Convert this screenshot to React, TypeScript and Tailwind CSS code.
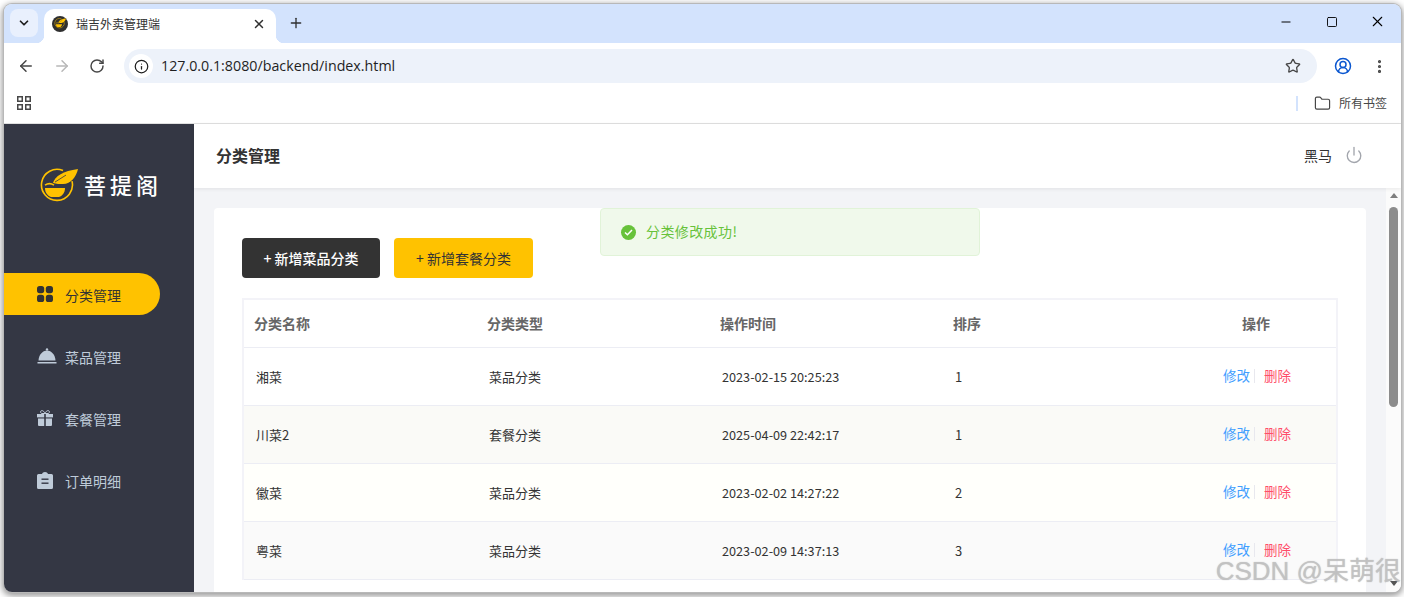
import { ChevronDown, X, Plus, ArrowLeft, ArrowRight, RotateCw, Info, Star, EllipsisVertical, Folder, Minus, Square, Power, CircleUserRound } from "lucide-react";

const rows = [
  { name: "湘菜", type: "菜品分类", time: "2023-02-15 20:25:23", sort: "1", bg: "bg-white" },
  { name: "川菜2", type: "套餐分类", time: "2025-04-09 22:42:17", sort: "1", bg: "bg-[#fafaf7]" },
  { name: "徽菜", type: "菜品分类", time: "2023-02-02 14:27:22", sort: "2", bg: "bg-[#fffffb]" },
  { name: "粤菜", type: "菜品分类", time: "2023-02-09 14:37:13", sort: "3", bg: "bg-[#fafafa]" },
];

function Logo({ size = 39 }: { size?: number }) {
  return (
    <svg width={size} height={size * 0.85} viewBox="0 0 39 33" fill="none">
      <path d="M24 2.500A15.500 15.500 0 1 0 33 13" stroke="#ffc200" strokeWidth="1.600" />
      <path d="M14 15c2-7 10-12 25-14-2 8-7 15-15 15-3 0-7 0-10-1z" fill="#ffc200" />
      <path d="M16 14l11-7" stroke="#343744" strokeWidth="0.800" />
      <path d="M6 20h20c0 5-3 8-6 9h-8c-3-1-6-4-6-9z" fill="#ffc200" />
      <path d="M6 17c3-2 6-2 9 0" stroke="#ffc200" strokeWidth="1.600" />
    </svg>
  );
}

function AppsIcon() {
  return (
    <svg width="14" height="14" viewBox="0 0 14 14" fill="none" stroke="#474747" strokeWidth="1.500">
      <rect x="0.750" y="0.750" width="4.500" height="4.500" />
      <rect x="8.750" y="0.750" width="4.500" height="4.500" />
      <rect x="0.750" y="8.750" width="4.500" height="4.500" />
      <rect x="8.750" y="8.750" width="4.500" height="4.500" />
    </svg>
  );
}

function GridIcon() {
  return (
    <svg width="16" height="16" viewBox="0 0 16 16" fill="#333">
      <rect x="0" y="0" width="7.200" height="7.200" rx="2.600" />
      <rect x="8.800" y="0" width="7.200" height="7.200" rx="2.600" />
      <rect x="0" y="8.800" width="7.200" height="7.200" rx="2.600" />
      <rect x="8.800" y="8.800" width="7.200" height="7.200" rx="2.600" />
    </svg>
  );
}

function BellIcon() {
  return (
    <svg width="20" height="16" viewBox="0 0 20 16" fill="#bfcbd9">
      <circle cx="10" cy="1.400" r="1.200" />
      <path d="M1.500 12.500C1.800 7 5.500 2.600 10 2.600s8.200 4.400 8.500 9.900z" />
      <rect x="0.500" y="14" width="19" height="1.500" />
    </svg>
  );
}

function GiftIcon() {
  return (
    <svg width="16" height="16" viewBox="0 0 16 16" fill="#bfcbd9">
      <path d="M4.500 3.500C3.200 2.600 3.300.8 4.700.6 6.100.4 7.500 2 8 3.500 8.500 2 9.900.4 11.300.6c1.400.2 1.500 2 .2 2.900z" fill="none" stroke="#bfcbd9" strokeWidth="1" />
      <rect x="0" y="4" width="7.200" height="3.400" />
      <rect x="8.800" y="4" width="7.200" height="3.400" />
      <path d="M1 8.400h6.200V16H2a1 1 0 0 1-1-1zM8.800 8.400H15V15a1 1 0 0 1-1 1H8.800z" />
    </svg>
  );
}

function ClipboardIcon() {
  return (
    <svg width="16" height="17" viewBox="0 0 16 17" fill="#bfcbd9">
      <path d="M1.500 2H5c.3-1.200 1.600-2 3-2s2.700.8 3 2h3.500A1.500 1.500 0 0 1 16 3.500V15.500A1.500 1.500 0 0 1 14.500 17h-13A1.500 1.500 0 0 1 0 15.500V3.500A1.500 1.500 0 0 1 1.500 2z" />
      <rect x="4.500" y="6.500" width="7" height="1.400" fill="#343744" />
      <rect x="4.500" y="10.500" width="7" height="1.400" fill="#343744" />
    </svg>
  );
}

function TabFlare({ side }: { side: "left" | "right" }) {
  return side === "left" ? (
    <span className="absolute bottom-0 left-[-8px] h-2 w-2 bg-[radial-gradient(circle_at_0_0,transparent_8px,white_8.5px)]" />
  ) : (
    <span className="absolute bottom-0 right-[-8px] h-2 w-2 bg-[radial-gradient(circle_at_100%_0,transparent_8px,white_8.5px)]" />
  );
}

function NavItem({ icon, label, active }: { icon: React.ReactNode; label: string; active?: boolean }) {
  return (
    <div
      className={
        active
          ? "flex h-[42px] w-[156px] items-center rounded-r-[21px] bg-[#ffc200] text-[#333]"
          : "flex h-[42px] w-[156px] items-center text-[#bfcbd9]"
      }
    >
      <span className="flex w-[61px] pl-[33px]">{icon}</span>
      <span className="pt-[2px] text-[14px]">{label}</span>
    </div>
  );
}

export default function App() {
  return (
    <div className="h-[597px] w-[1404px] overflow-hidden bg-white pl-1 pr-[3px] pt-1 font-['Noto_Sans_CJK_SC','Noto_Sans',sans-serif] text-[#333]">
      <div className="relative flex h-[588px] flex-col overflow-hidden rounded-lg shadow-[0_0_0_1px_#b8b8b8,0_2px_6px_2px_#9a9a9a]">
        {/* tab strip */}
        <div className="flex h-[39px] shrink-0 items-end bg-[#d3e3fd]">
          <button className="mb-[6px] ml-[6px] flex h-7 w-7 items-center justify-center rounded-lg bg-[#e9f0fd]">
            <ChevronDown size={14} strokeWidth={3} className="text-[#1f1f1f]" />
          </button>
          <div className="relative ml-[6px] flex h-[34px] w-[232px] items-center rounded-t-[10px] bg-white pb-[5px] pl-2 pr-[10px]">
            <TabFlare side="left" />
            <TabFlare side="right" />
            <span className="flex h-4 w-4 items-center justify-center overflow-hidden rounded-full bg-[#2f2f2f]">
              <Logo size={12} />
            </span>
            <span className="ml-2 flex-1 text-[12px] text-[#303030]">瑞吉外卖管理端</span>
            <X size={14} strokeWidth={2.500} className="text-[#303030]" />
          </div>
          <Plus size={16} strokeWidth={2} className="mb-3 ml-3 text-[#303030]" />
          <div className="flex-1" />
          <div className="mb-[13px] flex items-center gap-[31px] pr-[15px] text-black">
            <Minus size={14} strokeWidth={1.700} className="mr-[2px]" />
            <Square size={12} strokeWidth={1.800} />
            <X size={17} strokeWidth={1.500} />
          </div>
        </div>

        {/* toolbar */}
        <div className="flex h-10 shrink-0 items-center bg-white pt-[6px] text-[#474747]">
          <div className="flex w-[120px] items-center gap-[18px] pl-[13px]">
            <ArrowLeft size={18} strokeWidth={2} />
            <ArrowRight size={18} strokeWidth={2} className="text-[#b8b8b8]" />
            <RotateCw size={16} strokeWidth={2.200} />
          </div>
          <div className="flex h-[34px] w-[1193px] items-center rounded-full bg-[#edf2fa] pl-[5px] pr-4">
            <span className="flex h-6 w-6 items-center justify-center rounded-full bg-white">
              <Info size={15} strokeWidth={2} className="text-[#1f1f1f]" />
            </span>
            <span className="ml-2 flex-1 font-['Open_Sans',sans-serif] text-[14.250px] text-[#1f1f1f]">
              127.0.0.1:8080/backend/index.html
            </span>
            <Star size={16} strokeWidth={2} className="text-[#474747]" />
          </div>
          <CircleUserRound size={18} strokeWidth={2} className="ml-[17px] text-[#0b57d0]" />
          <EllipsisVertical size={17} strokeWidth={2.500} className="ml-[19px] text-[#474747]" />
        </div>

        {/* bookmarks bar */}
        <div className="flex h-[41px] shrink-0 items-center border-b border-[#e0e0e0] bg-white">
          <span className="ml-[13px]">
            <AppsIcon />
          </span>
          <div className="flex-1" />
          <span className="h-[15px] w-[2px] bg-[#d3e3fd]" />
          <Folder size={17} strokeWidth={1.700} className="ml-4 text-[#474747]" />
          <span className="ml-2 mr-[14px] text-[12px] text-[#474747]">所有书签</span>
        </div>

        {/* app */}
        <div className="flex min-h-0 flex-1">
          <aside className="flex w-[190px] shrink-0 flex-col bg-[#343744]">
            <div className="ml-[35px] mt-[44px] flex items-center gap-[6px]">
              <Logo />
              <span className="mb-[2px] text-[22px] font-medium leading-[32px] tracking-[4px] text-white">菩提阁</span>
            </div>
            <nav className="mt-[71px] flex flex-col gap-5">
              <NavItem active icon={<GridIcon />} label="分类管理" />
              <NavItem icon={<BellIcon />} label="菜品管理" />
              <NavItem icon={<GiftIcon />} label="套餐管理" />
              <NavItem icon={<ClipboardIcon />} label="订单明细" />
            </nav>
          </aside>

          <div className="flex min-w-0 flex-1 flex-col">
            <header className="z-10 flex h-16 shrink-0 items-center justify-between bg-white pb-[2px] pl-[22px] pr-[38px] shadow-[0_1px_4px_rgba(0,0,0,0.08)]">
              <h1 className="text-[16px] font-bold text-[#333]">分类管理</h1>
              <div className="flex items-center gap-[13px]">
                <span className="text-[14px] text-[#333]">黑马</span>
                <Power size={18} strokeWidth={1.800} className="text-[#a3a6ad]" />
              </div>
            </header>

            <div className="relative flex min-h-0 flex-1 overflow-hidden bg-[#f3f4f7]">
              <div className="min-w-0 flex-1 px-5 pt-5">
                <div className="h-[500px] rounded-[4px] bg-white px-7 pt-[30px]">
                  <div className="flex gap-[14px]">
                    <button className="h-10 w-[138px] rounded-[4px] bg-[#333] text-[14px] font-medium text-white">
                      + 新增菜品分类
                    </button>
                    <button className="h-10 w-[139px] rounded-[4px] bg-[#ffc200] text-[14px] text-[#333]">
                      + 新增套餐分类
                    </button>
                  </div>

                  <div className="mt-[20px] border-x-2 border-t-2 border-[#f3f3f8] text-[13px]">
                    <div className="grid h-12 grid-cols-[233px_233px_233px_233px_1fr] items-center border-b border-[#ecedf4] text-[14px] font-bold text-[#666]">
                      <div className="pl-[10px]">分类名称</div>
                      <div className="pl-[10px]">分类类型</div>
                      <div className="pl-[10px]">操作时间</div>
                      <div className="pl-[10px]">排序</div>
                      <div className="text-center">操作</div>
                    </div>
                    {rows.map((r) => (
                      <div
                        key={r.name}
                        className={`grid h-[58px] grid-cols-[233px_233px_233px_233px_1fr] items-center border-b border-[#ecedf4] text-[#333] ${r.bg}`}
                      >
                        <div className="pl-3">{r.name}</div>
                        <div className="pl-3">{r.type}</div>
                        <div className="pl-3 text-[12.700px]">{r.time}</div>
                        <div className="pl-3">{r.sort}</div>
                        <div className="flex items-center justify-end pb-[2px] pr-[45px] text-[13.500px]">
                          <span className="text-[#419eff]">修改</span>
                          <span className="ml-[4px] mr-[9px] h-[14px] w-px bg-[#e8e8ee]" />
                          <span className="text-[#ff4d6a]">删除</span>
                        </div>
                      </div>
                    ))}
                  </div>
                </div>
              </div>

              {/* scrollbar */}
              <div className="flex w-[15px] shrink-0 flex-col items-center bg-[#fbfbfb] pt-[5px]">
                <span className="h-0 w-0 border-x-[4px] border-b-[5px] border-x-transparent border-b-[#7f7f7f]" />
                <span className="mt-[9px] h-[200px] w-[9px] rounded-full bg-[#8c8c8c]" />
                <span className="mt-[174px] h-0 w-0 border-x-[4px] border-t-[5px] border-x-transparent border-t-[#555]" />
              </div>

              {/* toast */}
              <div className="absolute left-[406px] top-5 flex h-12 w-[380px] items-center rounded-[4px] border border-[#e1f3d8] bg-[#f0f9eb] pl-5">
                <span className="flex h-[15px] w-[15px] items-center justify-center rounded-full bg-[#67c23a]">
                  <svg width="9" height="7" viewBox="0 0 9 7" fill="none">
                    <path d="M1 3.500l2.400 2.300L8 1" stroke="white" strokeWidth="1.500" />
                  </svg>
                </span>
                <span className="mb-[2px] ml-[10px] text-[14px] tracking-[0.4px] text-[#67c23a]">分类修改成功!</span>
              </div>
            </div>
          </div>
        </div>

        {/* watermark */}
        <div className="pointer-events-none absolute right-0 top-[556px] whitespace-nowrap font-['Liberation_Sans','Noto_Sans_CJK_SC',sans-serif] text-[26px] leading-[22px] text-[#c4c4c4]/80 [text-shadow:0_0_1px_rgba(120,120,120,0.5)]">
          CSDN @呆萌很
        </div>
      </div>
    </div>
  );
}
